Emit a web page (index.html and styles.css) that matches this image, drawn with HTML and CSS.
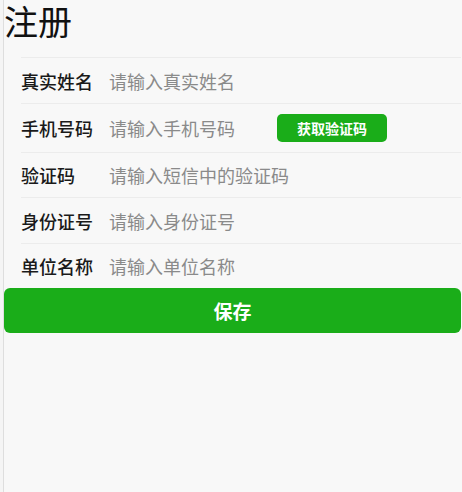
FILE: index.html
```html
<!DOCTYPE html>
<html lang="zh-CN">
<head>
    <meta charset="UTF-8">
    <meta name="viewport" content="width=device-width, initial-scale=1.0">
    <title>注册</title>
    <link rel="stylesheet" href="styles.css">
</head>
<body>
    <div class="page">
        <h1 class="title">注册</h1>

        <form class="form" id="registerForm">
            <div class="row row-tall">
                <label for="realname">真实姓名</label>
                <input type="text" id="realname" placeholder="请输入真实姓名">
            </div>

            <div class="row row-code">
                <label for="phone">手机号码</label>
                <input type="text" id="phone" class="input-phone" placeholder="请输入手机号码">
                <button type="button" class="btn-code">获取验证码</button>
            </div>

            <div class="row">
                <label for="smscode">验证码</label>
                <input type="text" id="smscode" placeholder="请输入短信中的验证码">
            </div>

            <div class="row row-tall">
                <label for="idcard">身份证号</label>
                <input type="text" id="idcard" placeholder="请输入身份证号">
            </div>

            <div class="row">
                <label for="company">单位名称</label>
                <input type="text" id="company" placeholder="请输入单位名称">
            </div>
        </form>

        <button type="submit" form="registerForm" class="btn-save">保存</button>
    </div>
</body>
</html>
```

FILE: styles.css
```css
/* page layout */
body {
    margin: 0;
    padding: 0;
    background-color: #f5f5f5;
    font-family: "Noto Sans CJK SC", "Liberation Sans", sans-serif;
}

.page {
    margin-left: 3px;
    min-height: 492px;
    border-left: 1px solid #dedede;
    background-color: #f8f8f8;
    padding-right: 1px;
}

.title {
    margin: 0 0 15px 0;
    font-size: 34px;
    line-height: 42px;
    font-weight: normal;
    color: #111;
}

/* form rows */
.form {
    margin: 0 0 0 17px;
}

.row {
    display: flex;
    align-items: center;
    height: 44px;
    border-top: 1px solid #ececec;
}

.row-tall {
    height: 45px;
}

.row-code {
    height: 48px;
}

.row label {
    flex: none;
    width: 88px;
    font-size: 18px;
    line-height: 24px;
    font-weight: 500;
    color: #1a1a1a;
}

.row input {
    flex: 1;
    min-width: 0;
    height: 24px;
    padding: 0;
    border: none;
    outline: none;
    background: transparent;
    font-family: inherit;
    font-size: 18px;
    line-height: 24px;
    color: #333;
}

.row input::placeholder {
    color: #8a8a8a;
}

.row .input-phone {
    flex: none;
    width: 168px;
}

.btn-code {
    flex: none;
    width: 110px;
    height: 28px;
    padding: 0;
    border: none;
    border-radius: 5px;
    background-color: #1aad19;
    color: #fff;
    font-family: inherit;
    font-size: 14px;
    line-height: 28px;
    font-weight: bold;
    cursor: pointer;
}

/* save button */
.btn-save {
    display: block;
    width: 100%;
    height: 45px;
    padding: 0;
    border: none;
    border-radius: 6px;
    background-color: #1aad19;
    color: #fff;
    font-family: inherit;
    font-size: 19px;
    font-weight: bold;
    cursor: pointer;
}

.btn-save:hover,
.btn-code:hover {
    background-color: #179b16;
}
```
